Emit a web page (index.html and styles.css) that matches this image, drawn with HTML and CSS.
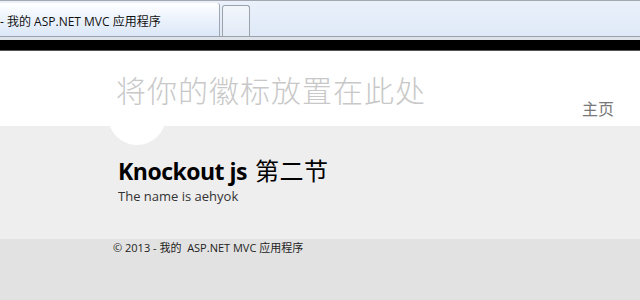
FILE: index.html
```html
<!DOCTYPE html>
<html lang="zh-CN">
<head>
<meta charset="utf-8">
<title>我的 ASP.NET MVC 应用程序</title>
<link rel="stylesheet" href="styles.css">
</head>
<body>
<div class="chrome">
  <div class="tabbar">
    <div class="tab">- 我的 ASP.NET MVC 应用程序</div>
    <div class="newtab"></div>
  </div>
  <div class="sep"></div>
  <div class="blackbar"></div>
</div>
<header class="header">
  <div class="site-title">将你的徽标放置在此处</div>
  <nav class="nav"><a class="nav-link">主页</a></nav>
</header>
<main class="main">
  <div class="accent"></div>
  <h2 class="title"><span class="latin">Knockout js</span> <span class="cjk">第二节</span></h2>
  <p class="name">The name is aehyok</p>
</main>
<footer class="footer">
  <p class="copy">© 2013 - 我的&nbsp; ASP.NET MVC 应用程序</p>
</footer>
</body>
</html>
```
FILE: styles.css
```css
* { box-sizing: border-box; }
html, body { margin: 0; padding: 0; }
body {
  width: 640px;
  height: 300px;
  overflow: hidden;
  background: #e2e2e2;
  font-family: "Open Sans", "Noto Sans CJK SC", sans-serif;
}
.chrome { background: #dfe8f5; }
.tabbar {
  height: 37px;
  display: flex;
  align-items: flex-end;
  gap: 2px;
  border-top: 1px solid #a3a8b0;
  border-bottom: 1px solid #9ca2ac;
  background: linear-gradient(#eaf1fb, #dfe9f7);
}
.tab {
  width: 220px;
  height: 33px;
  padding: 9px 0 0 0;
  font-family: "Open Sans", "Noto Sans CJK SC", sans-serif;
  font-size: 12px;
  color: #111;
  background: linear-gradient(#ffffff, #f1f6fd 35%, #dbe7f8);
  border-right: 1px solid #a0a6b0;
  border-top-right-radius: 3px;
  white-space: nowrap;
}
.newtab {
  width: 28px;
  height: 31px;
  border: 1px solid #9ca2ac;
  border-bottom: none;
  border-radius: 3px 3px 0 0;
  background: linear-gradient(#f2f6fc, #e3ebf7);
}
.sep { height: 3px; background: #dde2e9; }
.blackbar { height: 11px; background: #000; border-bottom: 1px solid #555; }
.header {
  position: relative;
  z-index: 1;
  height: 75px;
  background: #fff;
  display: flex;
  justify-content: space-between;
  padding: 20px 26px 0 116px;
}
.site-title {
  font-family: "Noto Sans CJK SC", sans-serif;
  font-weight: 300;
  font-size: 30px;
  line-height: 36px;
  color: #c8c8c8;
  letter-spacing: 1px;
}
.nav { padding-top: 25px; }
.nav-link {
  font-family: "Noto Sans CJK SC", sans-serif;
  font-size: 16px;
  color: #777;
}
.main {
  position: relative;
  height: 113px;
  background: #efeeef;
  padding: 28px 0 0 118px;
}
.accent {
  position: absolute;
  left: 108px;
  top: -39px;
  width: 58px;
  height: 58px;
  border-radius: 50%;
  background: #fff;
}
.title {
  position: relative;
  margin: 0;
  font-size: 23px;
  line-height: 34px;
  color: #000;
  font-weight: normal;
}
.latin { font-weight: 700; letter-spacing: -0.5px; }
.cjk { font-size: 24px; margin-left: 2px; letter-spacing: 0.5px; }
.name {
  margin: 0;
  font-size: 13px;
  line-height: 17px;
  color: #333;
}
.footer { padding: 1px 0 0 113px; }
.copy {
  margin: 0;
  font-size: 11px;
  line-height: 16px;
  color: #222;
}
```
